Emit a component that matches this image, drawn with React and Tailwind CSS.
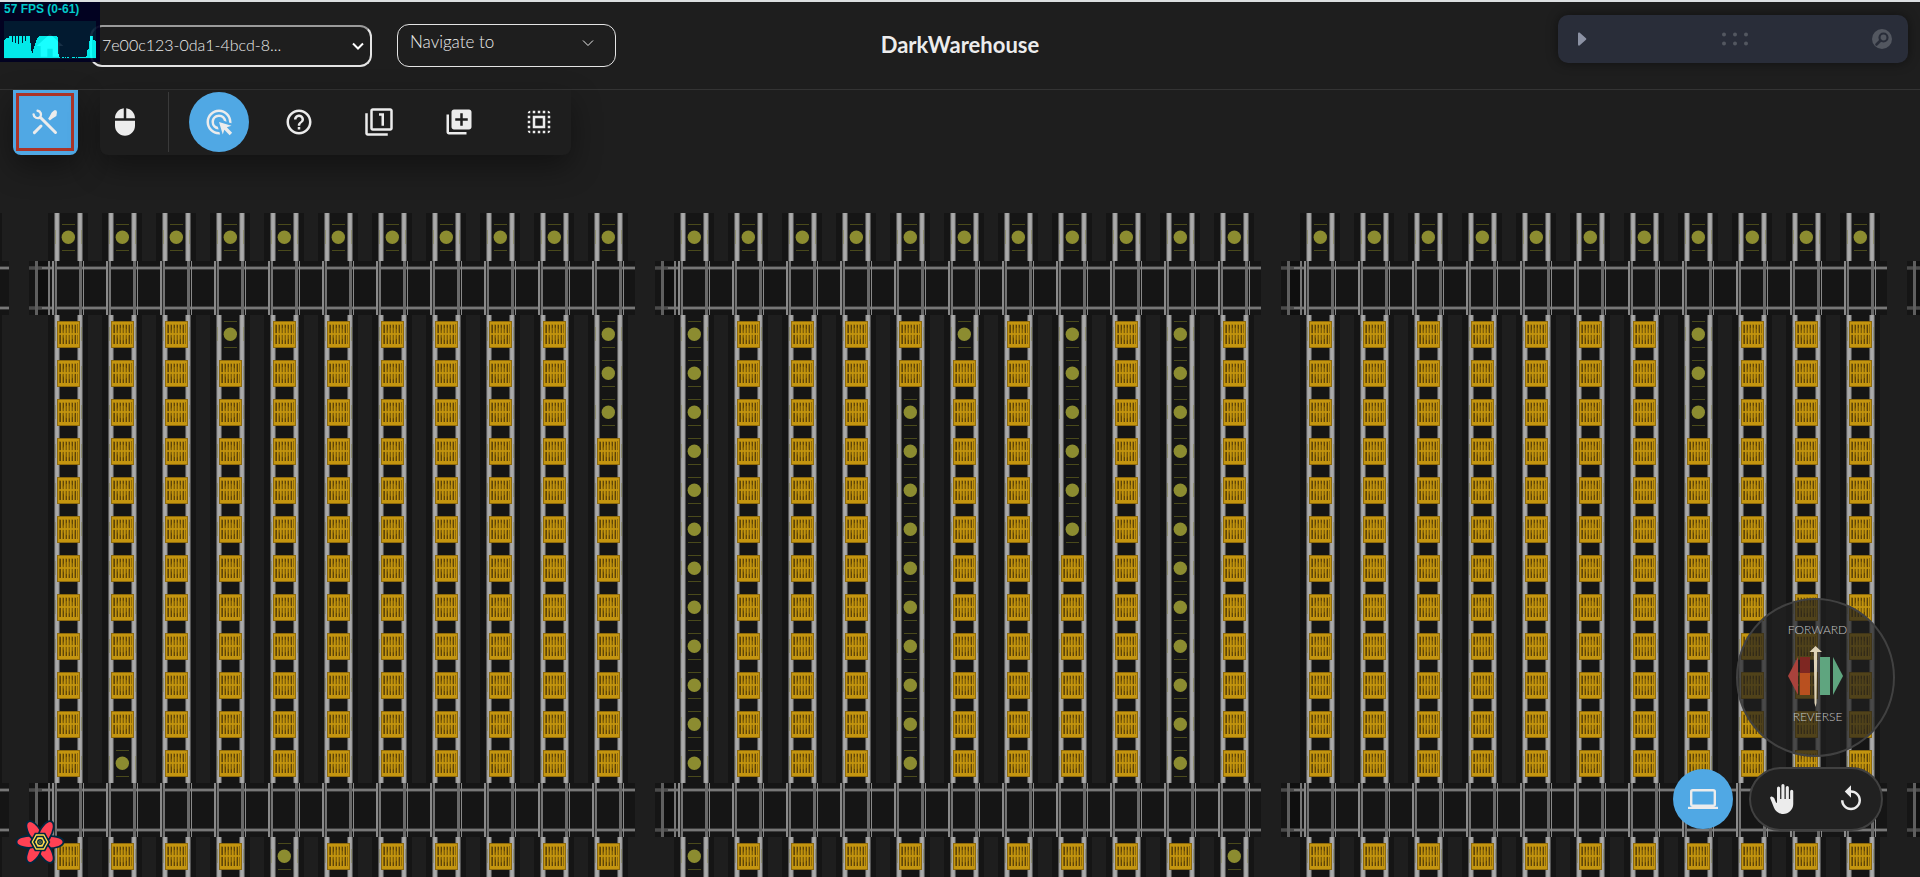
import React from "react";
import {
  MdMouse,
  MdAdsClick,
  MdHelpOutline,
  MdOutlineFilter1,
  MdLibraryAdd,
  MdSelectAll,
  MdBackHand,
  MdReplay,
  MdHome,
} from "react-icons/md";

const PITCH = 54;
const GROUP_PITCH = 626;
const FIRST_X = 68;
const ROWS = 12;
const LANES = [0, 1, 2, 3, 4, 5, 6, 7, 8, 9, 10];

const range = (from, to) => Array.from({ length: to - from + 1 }, (_, i) => from + i);

// Empty storage positions: lane index -> list of row indexes (row 12 is the lower block).
const BLOCKS = [
  { index: -1, empty: {} },
  { index: 0, empty: { 1: [11], 3: [0], 4: [12], 10: [0, 1, 2] } },
  {
    index: 1,
    empty: { 0: range(0, 12), 4: range(2, 11), 5: [0], 7: range(0, 5), 9: range(0, 11), 10: [12] },
  },
  { index: 2, empty: { 7: [0, 1, 2] } },
  { index: 3, empty: {} },
];

function Rails({ x, y, height }) {
  return (
    <g>
      <rect x={x - 20} y={y} width="40" height={height} fill="#151515" />
      {[-14, 9].map((dx) => (
        <g key={dx}>
          <rect x={x + dx} y={y} width="6" height={height} fill="#555555" />
          <rect x={x + dx + 1} y={y} width="4" height={height} fill="#8f8f8f" />
          <rect x={x + dx + 1.5} y={y} width="3" height={height} fill="#aaaaaa" />
        </g>
      ))}
    </g>
  );
}

function Cell({ x, y, empty }) {
  return (
    <g>
      <rect x={x - 13} y={y - 7} width="1" height="14" fill="#8f8f72" />
      <rect x={x + 13} y={y - 7} width="1" height="14" fill="#8f8f72" />
      {empty ? (
        <g>
          <rect x={x - 6} y={y - 13} width="13" height="1" fill="#4a4a1c" />
          <rect x={x - 6} y={y + 13} width="13" height="1" fill="#4a4a1c" />
          <circle cx={x + 0.3} cy={y + 0.3} r="6.7" fill="#8c8c30" />
        </g>
      ) : (
        <use href="#carton" x={x - 11} y={y - 13} />
      )}
    </g>
  );
}

function Track({ x, y }) {
  return (
    <g>
      <rect x={x - 39} y={y} width="606" height="54" fill="#151515" />
      <rect x={x - 32} y={y} width="12" height="54" fill="#0f0f0f" />
      {[6, 46].map((dy) => (
        <g key={dy}>
          <rect x={x - 39} y={y + dy - 1} width="606" height="4" fill="#3c3c3c" />
          <rect x={x - 39} y={y + dy} width="606" height="2" fill="#777777" />
          <rect x={x - 39} y={y + dy} width="13" height="2" fill="#4c4c4c" />
        </g>
      ))}
      <rect x={x - 33} y={y} width="3" height="54" fill="#5f5f5f" />
      <rect x={x - 20} y={y} width="2" height="54" fill="#777777" />
      {LANES.map((lane) => {
        const cx = x + lane * PITCH;
        return (
          <g key={lane}>
            <rect x={cx - 16} y={y} width="2" height="54" fill="#8a8a8a" />
            <rect x={cx - 14} y={y} width="1" height="54" fill="#2c2c2c" />
            <rect x={cx - 13} y={y} width="2" height="54" fill="#747474" />
            <rect x={cx + 11} y={y} width="3" height="54" fill="#6a6a6a" />
            <rect x={cx + 15} y={y} width="1" height="54" fill="#8a8a8a" />
          </g>
        );
      })}
    </g>
  );
}

function WarehouseMap() {
  return (
    <svg className="absolute inset-0 h-full w-full" role="img" aria-label="Warehouse floor map">
      <defs>
        <symbol id="carton" overflow="visible">
          <rect x="0" y="0" width="23" height="27" fill="#8f6b0d" />
          <rect x="1" y="1" width="21" height="25" fill="#c4950f" />
          <rect x="2" y="3" width="19" height="20" fill="#a67d0d" />
          {[2.5, 5.5, 8.5, 11.5, 14.5, 17.500].map((x) => (
            <rect key={x} x={x} y="4" width="1.6" height="19" fill="#5e4508" />
          ))}
          <rect x="20" y="3" width="1" height="20" fill="#6f520a" />
          {[4, 7, 10, 13, 16, 19].map((x) => (
            <rect key={x} x={x} y="2" width="1.400" height="22" fill="#c4950f" />
          ))}
          <rect x="2" y="12" width="19" height="2" fill="#c4950f" opacity="0.85" />
          <circle cx="11.5" cy="13" r="6.5" fill="#c4950f" opacity="0.35" />
        </symbol>
      </defs>
      {BLOCKS.map(({ index, empty }) => {
        const x0 = FIRST_X + index * GROUP_PITCH;
        return (
          <g key={index}>
            {LANES.map((lane) => {
              const x = x0 + lane * PITCH;
              const gaps = empty[lane] || [];
              return (
                <g key={lane}>
                  <Rails x={x} y={213} height={48} />
                  <Cell x={x} y={237} empty />
                  <Rails x={x} y={315} height={468} />
                  {range(0, ROWS - 1).map((r) => (
                    <Cell key={r} x={x} y={334 + r * 39} empty={gaps.includes(r)} />
                  ))}
                  <Rails x={x} y={837} height={400} />
                  <Cell x={x} y={856} empty={gaps.includes(12)} />
                </g>
              );
            })}
            <Track x={x0} y={261} />
            <Track x={x0} y={783} />
          </g>
        );
      })}
    </svg>
  );
}

const FPS_BARS = [
  18, 19, 20, 20, 20, 22, 22, 22, 16, 22, 22, 15, 22, 22, 14, 22, 22, 22, 15, 22, 22, 17, 22, 22, 22,
  22, 15, 7, 5, 9, 12, 15, 18, 20, 21, 22, 22, 22, 22, 22, 22, 22, 22, 22, 22, 22, 22, 22, 22, 22, 22,
  22, 22, 21, 4, 1, 0, 0, 1, 1, 0, 1, 0, 1, 1, 0, 0, 0, 1, 1, 1, 0, 1, 0, 1, 1, 1, 1, 1, 1, 1, 1, 2,
  8, 9, 17, 22, 22, 22, 18, 18, 17,
];

function FpsMeter() {
  return (
    <div className="absolute left-0 top-0 z-10 h-15 w-25 bg-[#000022] px-1 opacity-90">
      <p className="font-['Liberation_Sans',sans-serif] text-[12px] leading-[14px] font-bold whitespace-nowrap text-[#00dede]">
        57 FPS (0-61)
      </p>
      <svg className="mt-[5px] block h-[38px] w-[92px]" aria-hidden="true">
        <rect width="92" height="38" fill="#001a33" />
        {FPS_BARS.map((h, i) => (
          <rect key={i} x={i} y={37 - h} width="1" height={h} fill="#00ffff" />
        ))}
      </svg>
    </div>
  );
}

function Chevron({ className }) {
  return (
    <svg viewBox="0 0 12 8" className={className} fill="none" stroke="currentColor" aria-hidden="true">
      <path d="M1 1.5 6 6.5 11 1.5" />
    </svg>
  );
}

function ToolsIcon() {
  return (
    <svg viewBox="0 0 26 26" className="size-[26px]" aria-hidden="true">
      <path
        d="M5.6 1.7a4 4 0 0 1 2.5 6.5 4 4 0 0 1-6.5-2.8"
        fill="none"
        stroke="#ececec"
        strokeWidth="2.4"
        strokeLinecap="round"
      />
      <path d="m8.5 8.5 15 15" stroke="#ececec" strokeWidth="3" strokeLinecap="round" />
      <path d="M2.4 23.6 9 17" stroke="#ececec" strokeWidth="3" strokeLinecap="round" />
      <path
        d="M22.3 1.2h1.9l.8 1.9-.6 4-4 2.5-2.5 1.9-1.8-1.7 1.6-2.6 2-3.8z"
        fill="#ececec"
      />
    </svg>
  );
}

function QueryFlower() {
  return (
    <svg viewBox="-25 -23 50 46" className="h-[46px] w-[50px]" aria-hidden="true">
      <g fill="#ff4154" stroke="#00283f" strokeWidth="1.8" strokeLinejoin="round">
        {[0, 60, 120, 180, 240, 300].map((a) => (
          <path
            key={a}
            transform={`rotate(${a})`}
            d="M5 -4.5C11 -7.5 23.5 -5 23.5 0C23.5 4 16 6.5 8 6.5L3 5Z"
          />
        ))}
      </g>
      <path d="M-4.7 -8.5H4.7L9.4 0L4.7 8.5H-4.7L-9.4 0Z" fill="#ffd94c" stroke="#00283f" strokeWidth="1.6" />
      <path d="M-3 -5.5H3L6 0L3 5.5H-3L-6 0Z" fill="#ffd94c" stroke="#00283f" strokeWidth="1.6" />
      <circle r="2.2" fill="#ffd94c" stroke="#00283f" strokeWidth="1.4" />
      <circle r="1" fill="#00283f" />
    </svg>
  );
}

function Header() {
  return (
    <header className="relative flex h-[90px] items-start border-t-2 border-b border-t-[#dcdfe1] border-b-[#343434]">
      <FpsMeter />
      <a href="#home" aria-label="Home" className="ml-[34px] mt-[28px] text-white">
        <MdHome className="size-8" />
      </a>
      <div className="relative ml-6 mt-[23px]">
        <select
          aria-label="Warehouse"
          className="h-[42px] w-[282px] appearance-none rounded-xl border-2 border-[#e4e4e4] border-t-[#9b9b9b] bg-[#1e1e1e] pb-0.5 pl-[10px] text-[16px] font-light text-[#ececec]"
        >
          <option>7e00c123-0da1-4bcd-8...</option>
        </select>
        <Chevron className="pointer-events-none absolute right-2 top-[17px] h-2 w-3 stroke-2 text-white" />
      </div>
      <div className="relative ml-[25px] mt-[22px]">
        <select
          aria-label="Navigate to"
          className="h-[43px] w-[219px] appearance-none rounded-xl border border-[#e4e4e4] bg-[#1e1e1e] pb-2 pl-3 text-[17px] font-light text-[#ececec]"
        >
          <option>Navigate to</option>
        </select>
        <Chevron className="pointer-events-none absolute right-[22px] top-[15px] h-2 w-3 stroke-1 text-[#ececec]" />
      </div>
      <h1 className="absolute inset-x-0 top-[25px] mx-auto w-fit text-[22px] leading-9 font-bold text-[#ececec]">
        DarkWarehouse
      </h1>
      <div className="mt-[13px] mr-3 ml-auto flex h-12 w-[350px] items-center justify-between rounded-[10px] bg-[#292d39] pl-5 pr-4 shadow-[0_0_12px_rgba(0,0,0,0.45)]">
        <button type="button" aria-label="Expand controls" className="w-5">
          <svg viewBox="0 0 9 14" className="h-[14px] w-[9px]" aria-hidden="true">
            <path d="M0 1.5Q0 0 1.5 0.5L8 6.3Q8.8 7 8 7.7L1.5 13.5Q0 14 0 12.5Z" fill="#8c92a4" />
          </svg>
        </button>
        <svg viewBox="0 0 26 14" className="h-[14px] w-[26px]" fill="#535760" aria-hidden="true">
          {[2, 13, 24].map((x) => (
            <g key={x}>
              <circle cx={x} cy="2.5" r="2" />
              <circle cx={x} cy="11.5" r="2" />
            </g>
          ))}
        </svg>
        <button type="button" aria-label="Search controls">
          <svg viewBox="0 0 20 20" className="size-5" aria-hidden="true">
            <circle cx="10" cy="10" r="10" fill="#535760" />
            <circle cx="11.5" cy="8.5" r="4" fill="none" stroke="#292d39" strokeWidth="2.2" />
            <path d="m8.5 11.5-4 4" stroke="#292d39" strokeWidth="2.6" strokeLinecap="round" />
          </svg>
        </button>
      </div>
    </header>
  );
}

const TOOLS = [
  { label: "Click", Icon: MdAdsClick, active: true },
  { label: "Help", Icon: MdHelpOutline },
  { label: "Single layer", Icon: MdOutlineFilter1 },
  { label: "Add to library", Icon: MdLibraryAdd },
  { label: "Select all", Icon: MdSelectAll },
];

function Toolbar() {
  return (
    <nav className="relative flex items-start pl-[13px]" aria-label="Tools">
      <button
        type="button"
        aria-label="Edit tools"
        className="flex h-[65px] w-[65px] items-start rounded-b-lg bg-[#50a8e4] p-[3px] shadow-[0_12px_30px_rgba(0,0,0,0.4)]"
      >
        <span className="flex size-[58px] items-center justify-center border-3 border-[#ab3428]">
          <ToolsIcon />
        </span>
      </button>
      <div className="ml-[22px] flex h-[65px] w-[471px] items-start rounded-b-lg bg-[#1e1e1e] pt-0.5 text-[#ececec] shadow-[0_12px_30px_rgba(0,0,0,0.4)]">
        <button type="button" aria-label="Mouse" className="flex h-15 w-[50px] items-center justify-center">
          <MdMouse className="size-[30px]" />
        </button>
        <div className="mr-5 ml-[18px] h-15 w-px bg-[#3a3a3a]" />
        <div className="flex gap-5">
          {TOOLS.map(({ label, Icon, active }) => (
            <button
              key={label}
              type="button"
              aria-label={label}
              className={`flex size-15 items-center justify-center rounded-full ${active ? "bg-[#50a8e4]" : ""}`}
            >
              <Icon className="size-[30px]" />
            </button>
          ))}
        </div>
      </div>
    </nav>
  );
}

function Joystick() {
  return (
    <div className="mr-[25px] flex size-[159px] flex-col items-center rounded-full border-2 border-[#414141] bg-[#202020]/70 pt-5 text-[12px] leading-5 font-light text-[#c4c4c4]">
      <span className="pl-1">FORWARD</span>
      <svg viewBox="0 0 56 62" className="mt-[5px] h-[62px] w-14" aria-hidden="true">
        <path d="M0 31 10 12V50z" fill="#a8423c" />
        <rect x="12" y="12" width="10" height="38" fill="#7e2722" />
        <rect x="12" y="28" width="10" height="22" fill="#b9501f" />
        <rect x="32" y="12" width="10" height="38" fill="#5fa57f" />
        <path d="M55 31 45 12V50z" fill="#5fa57f" />
        <path d="M27.500 1 34 7H29.200L28.500 58 27.500 62 26.500 58 25.800 7H21.500z" fill="#ded3b8" />
      </svg>
      <span className="pl-1">REVERSE</span>
    </div>
  );
}

function ViewControls() {
  return (
    <div className="mt-[10px] mr-[37px] mb-[46px] flex items-center gap-4 text-[#ececec]">
      <button
        type="button"
        aria-label="Desktop view"
        className="flex size-15 items-center justify-center rounded-full bg-[#50a8e4]"
      >
        <svg viewBox="0 0 30 20" className="h-5 w-[30px]" fill="none" aria-hidden="true">
          <rect x="3.2" y="1.2" width="23.6" height="15.6" rx="1.5" stroke="currentColor" strokeWidth="2.4" />
          <rect y="17.8" width="30" height="2.2" fill="currentColor" />
        </svg>
      </button>
      <div className="flex h-16 w-[134px] items-center justify-between rounded-full border-2 border-[#414141] bg-[#212121] pr-[15px] pl-4">
        <button type="button" aria-label="Pan">
          <MdBackHand className="size-[30px]" />
        </button>
        <button type="button" aria-label="Reset view">
          <MdReplay className="size-[30px]" />
        </button>
      </div>
    </div>
  );
}

export default function App() {
  return (
    <div className="relative flex h-screen flex-col overflow-hidden bg-[#1e1e1e] font-['Lato','Open_Sans',sans-serif]">
      <WarehouseMap />
      <Header />
      <Toolbar />
      <main className="relative flex flex-1 items-end justify-between">
        <button type="button" aria-label="Open query devtools" className="mb-3 ml-[15px]">
          <QueryFlower />
        </button>
        <div className="flex flex-col items-end">
          <Joystick />
          <ViewControls />
        </div>
      </main>
    </div>
  );
}
